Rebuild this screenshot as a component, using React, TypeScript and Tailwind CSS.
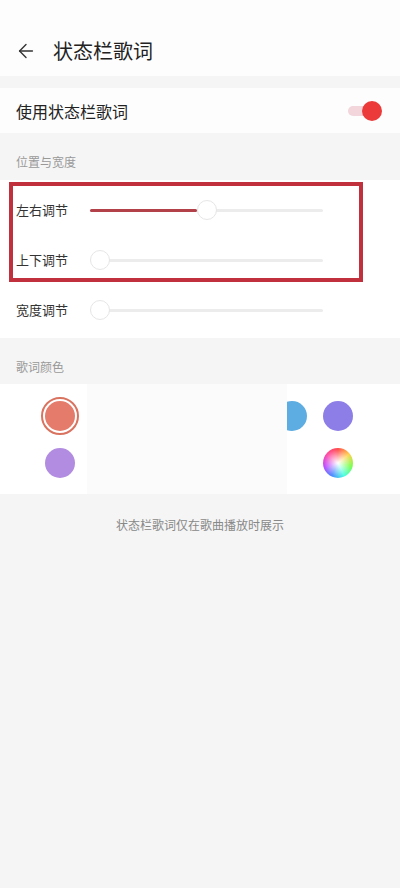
import { ArrowLeft } from "lucide-react";

const font = { fontFamily: '"Noto Sans CJK SC", "Noto Sans", sans-serif' };

interface SliderProps {
  label: string;
  value: number;
}

const SliderRow = ({ label, value }: SliderProps) => (
  <div className="flex h-[50px] items-center">
    <span className="w-[90px] shrink-0 pl-4 text-[13px] text-[#333]">{label}</span>
    <div className="relative h-[20px] w-[233px]">
      <div className="absolute left-0 right-0 top-[9px] h-[3px] rounded bg-[#ececec]" />
      <div
        className="absolute left-0 top-[9px] h-[3px] rounded bg-[#b3414a]"
        style={{ width: `${value}px` }}
      />
      <div
        className="absolute top-0 h-[20px] w-[20px] rounded-full border border-[#e6e6e6] bg-white"
        style={{ left: `${value}px` }}
      />
    </div>
  </div>
);

export default function App() {
  return (
    <div className="min-h-[888px] w-[400px] bg-[#f5f5f5]" style={font}>
      <div className="h-[76px] bg-[#fdfdfd] pt-[30px]">
        <div className="flex h-[42px] items-center">
          <ArrowLeft className="ml-[15px] h-[22px] w-[22px] text-[#333]" strokeWidth={1.5} />
          <span className="ml-[16px] text-[20px] text-[#222]">状态栏歌词</span>
        </div>
      </div>

      <div className="mt-[12px] flex h-[45px] items-center justify-between bg-[#fdfdfd] px-4">
        <span className="text-[16px] text-[#222]">使用状态栏歌词</span>
        <div className="relative mr-[2px] h-[20px] w-[34px]">
          <div className="absolute left-0 top-[5px] h-[10px] w-[28px] rounded-full bg-[#f2d6dc]" />
          <div className="absolute right-0 top-0 h-[20px] w-[20px] rounded-full bg-[#ec3a3a]" />
        </div>
      </div>

      <div className="flex h-[47px] items-end pb-[9px] pl-4 text-[12px] text-[#999]">位置与宽度</div>

      <div className="relative bg-white pb-[3px] pt-[5px]">
        <SliderRow label="左右调节" value={107} />
        <SliderRow label="上下调节" value={0} />
        <SliderRow label="宽度调节" value={0} />
        {/* highlight annotation */}
        <div className="pointer-events-none absolute left-[9px] top-[2px] h-[100px] w-[354px] border-4 border-[#c1313d]" />
      </div>

      <div className="flex h-[46px] items-end pb-[8px] pl-4 text-[12px] text-[#999]">歌词颜色</div>

      <div className="flex h-[110px] bg-white">
        <div className="flex w-[87px] flex-col items-center pl-[33px] pt-[13px]">
          <div className="flex h-[38px] w-[38px] items-center justify-center rounded-full border-2 border-[#d9735f] bg-white">
            <div className="h-[30px] w-[30px] rounded-full bg-[#e57b6a]" />
          </div>
          <div className="mt-[13px] h-[30px] w-[30px] rounded-full bg-[#b18ce0]" />
        </div>
        <div className="w-[200px] bg-[#fbfbfb]" />
        <div className="relative flex-1">
          <div className="absolute left-0 top-[17px] h-[30px] w-[20px] overflow-hidden">
            <div className="-ml-[10px] h-[30px] w-[30px] rounded-full bg-[#5dade2]" />
          </div>
          <div className="absolute left-[36px] top-[17px] h-[30px] w-[30px] rounded-full bg-[#8c7ee6]" />
          <div
            className="absolute left-[36px] top-[64px] h-[30px] w-[30px] rounded-full"
            style={{
              background:
                "radial-gradient(circle, #ffffff 0%, rgba(255,255,255,0) 65%), conic-gradient(#ff4d4d, #ffd24d, #7dff4d, #4dffe1, #4d8bff, #c44dff, #ff4da6, #ff4d4d)",
            }}
          />
        </div>
      </div>

      <div className="pt-[22px] text-center text-[12px] text-[#888]">状态栏歌词仅在歌曲播放时展示</div>
    </div>
  );
}
